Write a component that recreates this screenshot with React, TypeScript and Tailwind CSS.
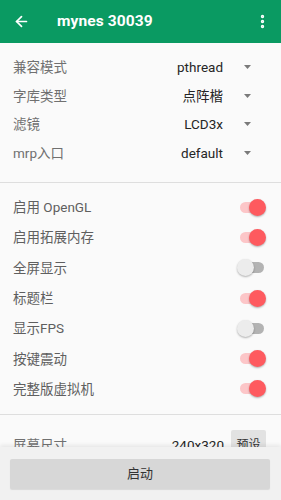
import { ArrowLeft, EllipsisVertical } from 'lucide-react';

const font = { fontFamily: 'Roboto, "Noto Sans CJK SC", sans-serif' };

const selects = [
  { label: '兼容模式', value: 'pthread' },
  { label: '字库类型', value: '点阵楷' },
  { label: '滤镜', value: 'LCD3x' },
  { label: 'mrp入口', value: 'default' },
];

const toggles = [
  { label: '启用 OpenGL', on: true },
  { label: '启用拓展内存', on: true },
  { label: '全屏显示', on: false },
  { label: '标题栏', on: true },
  { label: '显示FPS', on: false },
  { label: '按键震动', on: true },
  { label: '完整版虚拟机', on: true },
];

function Caret() {
  return (
    <svg width="7" height="4" viewBox="0 0 7 4" className="ml-[21px] mr-[30px]">
      <polygon points="0,0 7,0 3.5,4" fill="#7a7a7a" />
    </svg>
  );
}

function Switch({ on }: { on: boolean }) {
  return (
    <div className="relative mr-[15px] h-[17px] w-[29px]">
      <div
        className={`absolute left-[3px] top-[3px] h-[11px] w-[24px] rounded-full ${
          on ? 'bg-[#fcc6c8]' : 'bg-[#b3b3b3]'
        }`}
      />
      <div
        className={`absolute top-0 h-[17px] w-[17px] rounded-full shadow-[0_1px_2px_rgba(0,0,0,0.3)] ${
          on ? 'right-0 bg-[#fe5a5f]' : 'left-0 bg-[#ececec]'
        }`}
      />
    </div>
  );
}

export default function App() {
  return (
    <div className="flex h-[500px] w-[281px] flex-col overflow-hidden bg-[#fafafa]" style={font}>
      <header className="flex h-[43px] shrink-0 items-center bg-[#0a9a62] text-white">
        <ArrowLeft className="ml-[13px] h-[17px] w-[17px]" strokeWidth={2.4} />
        <span className="ml-[27px] text-[15.5px] font-bold tracking-[0.1px]">mynes 30039</span>
        <EllipsisVertical className="ml-auto mr-[10px] h-[17px] w-[17px]" strokeWidth={2.8} />
      </header>

      <main className="flex-1 overflow-hidden">
        <div className="pt-[10px] pb-[15px]">
          {selects.map((s) => (
            <div key={s.label} className="flex h-[28.5px] items-center text-[13.5px]">
              <span className="ml-[13px] text-[#707070]">{s.label}</span>
              <span className="ml-auto text-[#262626]">{s.value}</span>
              <Caret />
            </div>
          ))}
        </div>
        <div className="h-px bg-[#dedede]" />

        <div className="pt-[9px] pb-[10px]">
          {toggles.map((t) => (
            <div key={t.label} className="flex h-[30.3px] items-center text-[13.5px]">
              <span className="ml-[13px] text-[#5f5f5f]">{t.label}</span>
              <span className="ml-auto" />
              <Switch on={t.on} />
            </div>
          ))}
        </div>
        <div className="h-px bg-[#dedede]" />

        <div className="flex h-[30px] items-center pt-[0px] mt-[15px] text-[13.5px]">
          <span className="ml-[13px] text-[#707070]">屏幕尺寸</span>
          <span className="ml-auto text-[#262626]">240x320</span>
          <button className="ml-[7px] mr-[15px] h-[30px] w-[35px] rounded-[2px] bg-[#e2e2e2] text-[12px] text-[#333]">
            预设
          </button>
        </div>
      </main>

      <footer className="relative z-10 h-[53px] shrink-0 bg-[#f1f1f1] px-[10px] pt-[12px] shadow-[0_-2px_4px_rgba(0,0,0,0.08)]">
        <button className="h-[30px] w-[260px] rounded-[2px] bg-[#d7d7d7] text-[13px] text-[#333] shadow-[0_1px_1px_rgba(0,0,0,0.1)]">
          启动
        </button>
      </footer>
    </div>
  );
}
